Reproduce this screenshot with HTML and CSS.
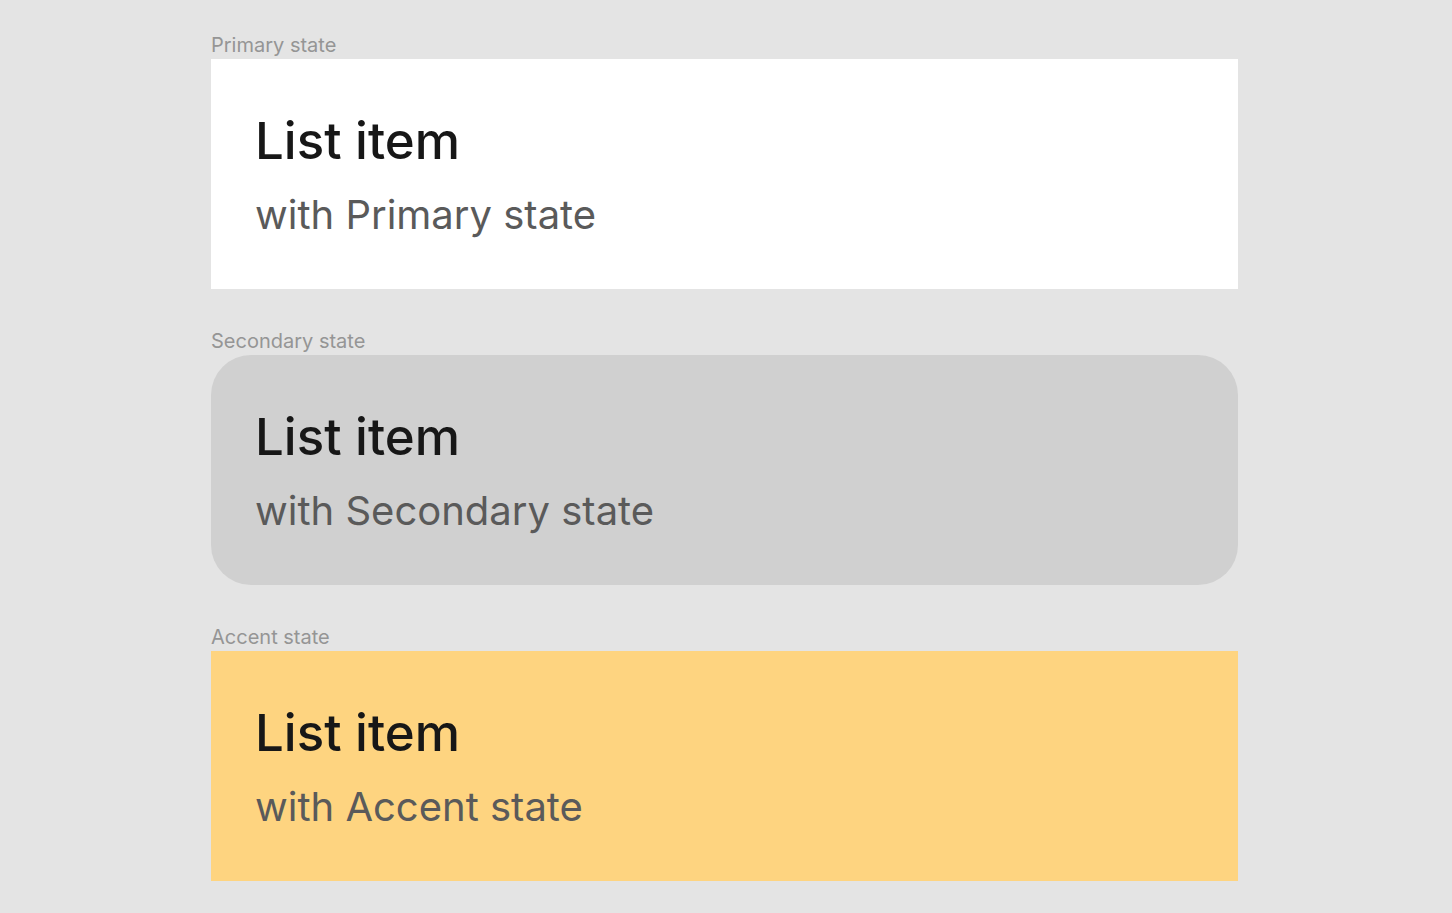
FILE: index.html
```html
<!DOCTYPE html>
<html>
<head>
<meta charset="utf-8">
<link rel="stylesheet" href="styles.css">
</head>
<body>
<main class="page">
  <section class="state">
    <div class="label">Primary state</div>
    <div class="card card-primary">
      <div class="title">List item</div>
      <div class="subtitle">with Primary state</div>
    </div>
  </section>
  <section class="state">
    <div class="label">Secondary state</div>
    <div class="card card-secondary">
      <div class="title">List item</div>
      <div class="subtitle">with Secondary state</div>
    </div>
  </section>
  <section class="state">
    <div class="label">Accent state</div>
    <div class="card card-accent">
      <div class="title">List item</div>
      <div class="subtitle">with Accent state</div>
    </div>
  </section>
</main>
</body>
</html>
```
FILE: styles.css
```css
html, body {
  margin: 0;
  padding: 0;
  background: #e4e4e4;
}
.page {
  width: 1027px;
  margin-left: 211px;
  padding-top: 32px;
  display: flex;
  flex-direction: column;
  gap: 39px;
}
.state {
  display: flex;
  flex-direction: column;
}
.label {
  font-family: Inter, "Liberation Sans", sans-serif;
  font-size: 20px;
  line-height: 27px;
  color: #959595;
}
.card {
  height: 230px;
  box-sizing: border-box;
  padding: 52px 44px 0;
}
.card-primary { background: #ffffff; }
.card-secondary { background: #d0d0d0; border-radius: 40px; }
.card-accent { background: #fed480; }
.title {
  font-family: Inter, "Liberation Sans", sans-serif;
  font-weight: 500;
  font-size: 51px;
  line-height: 60px;
  color: #171717;
}
.subtitle {
  margin-top: 19px;
  font-family: Inter, "Liberation Sans", sans-serif;
  font-size: 40px;
  line-height: 50px;
  color: #5a5a5a;
}
```
